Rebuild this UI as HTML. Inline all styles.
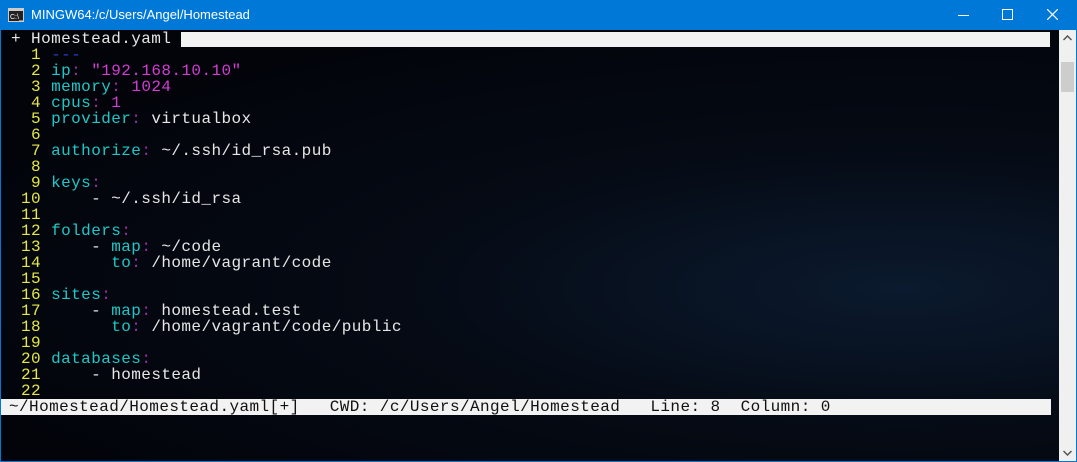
<!DOCTYPE html><html><head><style>
body{margin:0;width:1077px;height:462px;overflow:hidden;background:#0078d7;font-family:"Liberation Mono",monospace}
#title{position:absolute;left:0;top:0;width:1077px;height:30px;background:#0078d7;color:#fff;font:13px "Liberation Sans",sans-serif}
#term{position:absolute;left:1px;top:30px;width:1058px;height:431px;background:radial-gradient(ellipse at 85% 60%,#0b1a2e 0%,#050a14 40%,#02040a 80%);}
#sb{position:absolute;left:1059px;top:30px;width:17px;height:431px;background:#f0f0f0}
.row{position:absolute;left:11px;height:16px;line-height:16px;font-size:16px;letter-spacing:0.42px;white-space:pre;color:#e6e6e6}
.n{color:#e6e64a}.k{color:#1fc8c8}.c{color:#a02ca8}.m{color:#d43cd4}.b{color:#2a3cc8}
</style></head><body>
<div id="title">
<svg style="position:absolute;left:8px;top:8px" width="16" height="14"><rect x="0.5" y="0.5" width="15" height="13" fill="#222" stroke="#ccc"/><rect x="1" y="1" width="14" height="2" fill="#ccc"/><text x="2" y="11" font-size="7" fill="#fff" font-family="Liberation Sans">C:\_</text></svg>
<span style="position:absolute;left:31px;top:7px">MINGW64:/c/Users/Angel/Homestead</span>
<div style="position:absolute;left:958px;top:15px;width:11px;height:1px;background:#fff"></div>
<div style="position:absolute;left:1002px;top:9px;width:9px;height:9px;border:1px solid #fff"></div>
<svg style="position:absolute;left:1047px;top:9px" width="11" height="11"><path d="M0 0L11 11M11 0L0 11" stroke="#fff" stroke-width="1.2"/></svg>
</div>
<div id="term">
<div style="position:absolute;left:180px;top:2px;width:869px;height:15px;background:#f2f2f2"></div>
<div style="position:absolute;left:0;top:369px;width:1050px;height:16px;background:#f2f2f2"></div>
</div>
<div id="sb"><div style="position:absolute;left:2px;top:32px;width:13px;height:30px;background:#cdcdcd"></div>
<svg style="position:absolute;left:4px;top:5px" width="9" height="6"><path d="M0.5 5L4.5 1L8.5 5" stroke="#555" fill="none" stroke-width="1.5"/></svg>
<svg style="position:absolute;left:4px;top:420px" width="9" height="6"><path d="M0.5 1L4.5 5L8.5 1" stroke="#555" fill="none" stroke-width="1.5"/></svg></div>
<div class="row" style="top:31px">+ Homestead.yaml</div>
<div class="row" style="top:47px"><span class="n">  1</span> <span class="b">---</span></div>
<div class="row" style="top:63px"><span class="n">  2</span> <span class="k">ip</span><span class="c">:</span> <span class="m">"192.168.10.10"</span></div>
<div class="row" style="top:79px"><span class="n">  3</span> <span class="k">memory</span><span class="c">:</span> <span class="m">1024</span></div>
<div class="row" style="top:95px"><span class="n">  4</span> <span class="k">cpus</span><span class="c">:</span> <span class="m">1</span></div>
<div class="row" style="top:111px"><span class="n">  5</span> <span class="k">provider</span><span class="c">:</span> virtualbox</div>
<div class="row" style="top:127px"><span class="n">  6</span></div>
<div class="row" style="top:143px"><span class="n">  7</span> <span class="k">authorize</span><span class="c">:</span> ~/.ssh/id_rsa.pub</div>
<div class="row" style="top:159px"><span class="n">  8</span></div>
<div class="row" style="top:175px"><span class="n">  9</span> <span class="k">keys</span><span class="c">:</span></div>
<div class="row" style="top:191px"><span class="n"> 10</span>     - ~/.ssh/id_rsa</div>
<div class="row" style="top:207px"><span class="n"> 11</span></div>
<div class="row" style="top:223px"><span class="n"> 12</span> <span class="k">folders</span><span class="c">:</span></div>
<div class="row" style="top:239px"><span class="n"> 13</span>     - <span class="k">map</span><span class="c">:</span> ~/code</div>
<div class="row" style="top:255px"><span class="n"> 14</span>       <span class="k">to</span><span class="c">:</span> /home/vagrant/code</div>
<div class="row" style="top:271px"><span class="n"> 15</span></div>
<div class="row" style="top:287px"><span class="n"> 16</span> <span class="k">sites</span><span class="c">:</span></div>
<div class="row" style="top:303px"><span class="n"> 17</span>     - <span class="k">map</span><span class="c">:</span> homestead.test</div>
<div class="row" style="top:319px"><span class="n"> 18</span>       <span class="k">to</span><span class="c">:</span> /home/vagrant/code/public</div>
<div class="row" style="top:335px"><span class="n"> 19</span></div>
<div class="row" style="top:351px"><span class="n"> 20</span> <span class="k">databases</span><span class="c">:</span></div>
<div class="row" style="top:367px"><span class="n"> 21</span>     - homestead</div>
<div class="row" style="top:383px"><span class="n"> 22</span></div>
<div class="row" style="top:399px;left:9px;color:#111">~/Homestead/Homestead.yaml[+]   CWD: /c/Users/Angel/Homestead   Line: 8  Column: 0</div>
</body></html>
